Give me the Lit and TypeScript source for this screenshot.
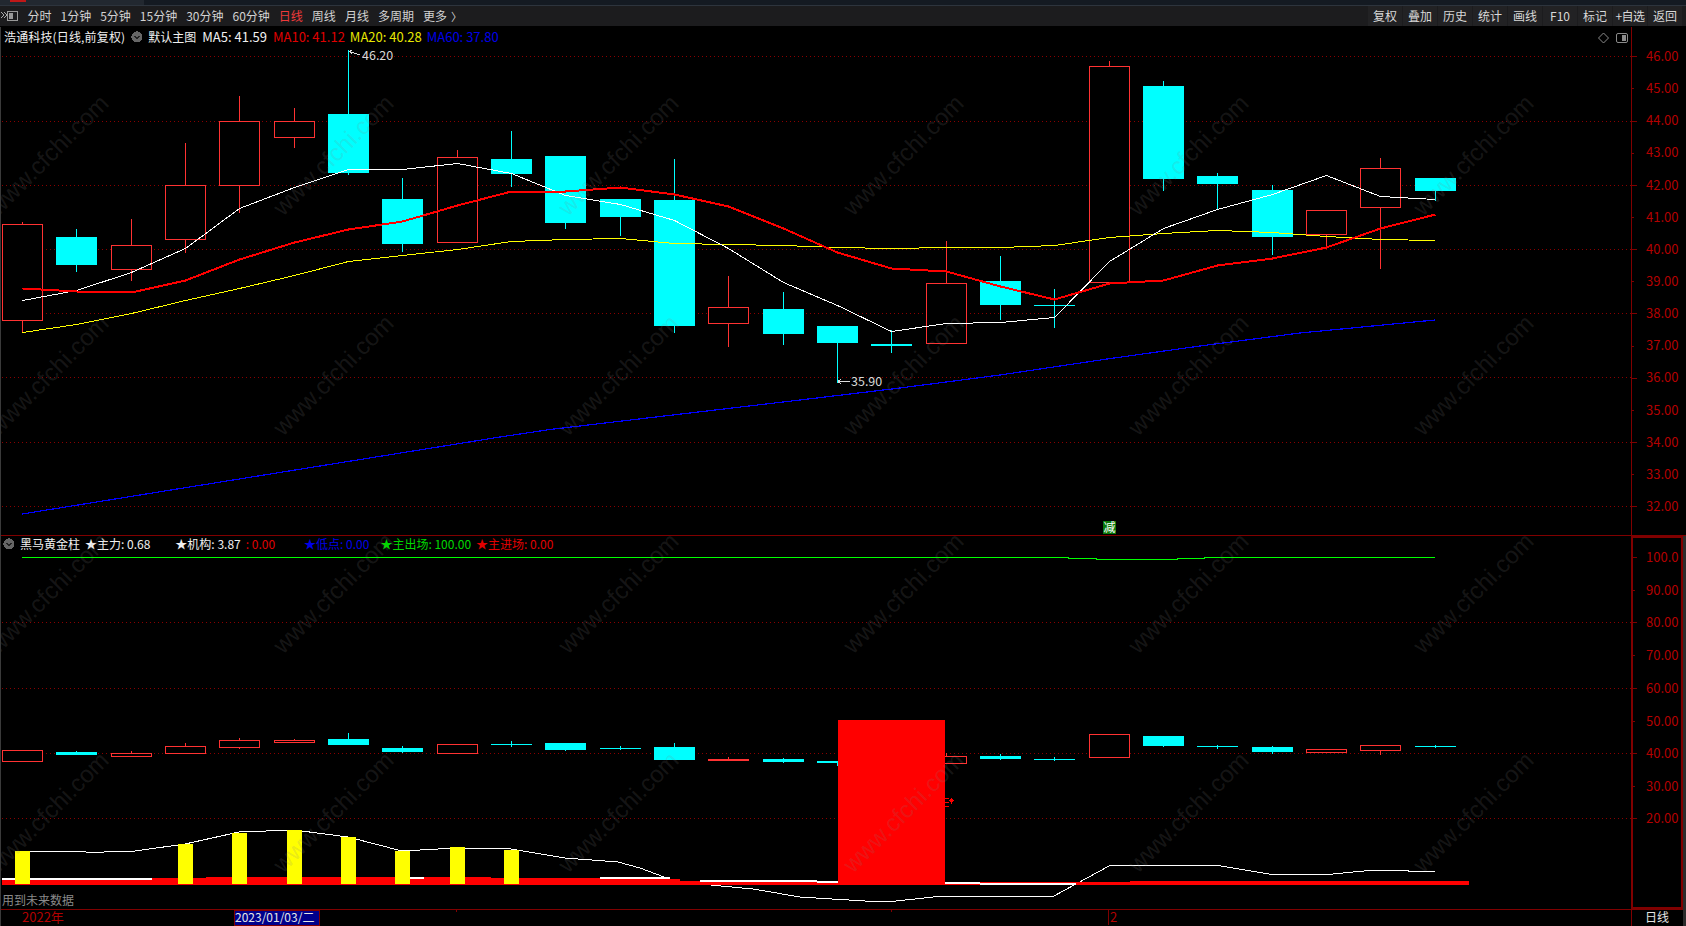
import { LitElement, html, css, svg } from "lit";
import { customElement } from "lit/decorators.js";

const CX = [22.5,76.5,131.5,185.5,239.5,294.5,348.5,402.5,457.5,511.5,565.5,620.5,674.5,728.5,783.5,837.5,891.5,946.5,1000.5,1054.5,1109.5,1163.5,1217.5,1272.5,1326.5,1380.5,1435.5];

// [up?, bodyTop, bodyBottom, wickTop, wickBottom]
const MAIN: [number, number, number, number, number][] = [
  [1,224,320,222,332],[0,237,265,229,272],[1,245,269,219,281],[1,185,239,143,253],[1,121,185,96,213],
  [1,121,137,108,148],[0,114,173,50,175],[0,199,244,178,252],[1,157,242,150,242],[0,159,174,131,187],
  [0,156,223,156,229],[0,199,217,199,236],[0,200,326,159,333],[1,307,323,276,347],[0,309,334,292,345],
  [0,326,343,326,383],[0,344,346,330,353],[1,283,343,241,343],[0,281,305,256,320],[0,305,306,289,328],
  [1,66,282,61,285],[0,86,179,81,191],[0,176,184,173,209],[0,190,237,185,255],[1,210,234,210,246],
  [1,168,207,158,269],[0,178,191,178,201],
];
const SUB: [number, number, number, number, number][] = [
  [1,750,761,750,761],[0,752,755,751,755],[1,753,756,751,756],[1,746,753,743,753],[1,740,747,738,749],
  [1,740,742,739,743],[0,739,745,733,745],[0,748,752,746,753],[1,744,753,744,753],[0,744,745,741,747],
  [0,743,750,743,751],[0,748,749,746,750],[0,747,760,743,760],[1,759,760,757,761],[0,759,762,758,763],
  [0,761,763,761,766],[0,760,761,760,761],[1,756,763,753,763],[0,756,759,754,760],[0,759,760,757,761],
  [1,734,757,734,757],[0,736,746,736,747],[0,746,747,745,749],[0,747,752,746,754],[1,749,752,749,753],
  [1,745,750,745,755],[0,746,747,745,748],
];
const MA5 = [300,290,272,248,208,187,169,169,163,173,195,204,220,248,282,305,331,323,322,317,261,228,209,194,175,196,199];
const MA10 = [288,291,292,280,259,242,229,221,205,191,191,187,194,206,228,252,268,271,286,299,283,280,265,258,247,228,214];
const MA20 = [332,324,313,300,288,275,261,255,249,241,239,238,243,244,245,247,248,247,247,245,237,233,230,232,236,239,240];
const MA60: [number, number][] = [[22,514],[500,437],[550,429.5],[800,400],[900,388],[1000,375],[1107,359],[1200,346],[1300,333],[1435,320]];
const WHITE_UP: [number, number][] = [[22,851],[76,851],[86,852],[104,852],[135,851],[185,844],[239,832],[294,830],[348,837],[402,851],[457,848],[511,849],[565,858],[618,862],[640,868],[672,880],[700,884],[753,889],[800,897],[832,899],[865,901],[883,902],[896,901],[915,899],[942,896],[1054,896],[1109,866],[1137,865],[1190,865],[1221,866],[1269,874],[1333,874],[1374,870],[1408,870],[1408,871],[1435,871]];
const WHITE_LOW: [number, number, number][] = [[2,152,878],[398,424,877],[600,670,877],[700,800,880],[800,817,880],[817,838,881],[945,980,882],[980,1034,883],[1034,1076,883]];
const BAND: [number, number, number][] = [[2,206,878],[206,491,877],[491,600,878],[600,680,879],[680,800,881],[800,1076,882],[1076,1130,882],[1130,1469,881]];
const YELLOW: [number, number][] = [[22.5,851],[185.5,844],[239.5,833],[294.5,830],[348.5,837],[402.5,851],[457.5,847],[511.5,850]];

const GRID_MAIN = [56,121,185,249,313,377,442,506];
const GRID_SUB = [622,688,753,818];
const AXIS_MAIN = Array.from({ length: 15 }, (_, i) => ({ v: (46 - i).toFixed(2), y: 56.3 + i * 32.14, major: i % 2 === 0 }));
const AXIS_SUB = [["100.0",557,1],["90.00",590,0],["80.00",622,1],["70.00",655,0],["60.00",688,1],["50.00",721,0],["40.00",753,1],["30.00",786,0],["20.00",818,1]] as [string, number, number][];

const LEFT_TOOLS = ["分时","1分钟","5分钟","15分钟","30分钟","60分钟","日线","周线","月线","多周期","更多"];
const RIGHT_TOOLS = ["复权","叠加","历史","统计","画线","F10","标记","+自选","返回"];
const WM_X = [-2,283,568,853,1138,1423];
const WM_Y = [217,437,655,874];

const pts = (a: [number, number][]) => a.map((p) => p.join(",")).join(" ");
const maPts = (a: number[]) => a.map((y, i) => `${CX[i]},${y + 0.5}`).join(" ");

function candles(data: typeof MAIN) {
  return data.map(([up, t, b, wt, wb], i) => {
    const x = CX[i];
    if (up) {
      return svg`<g class="up">
        ${wt < t ? svg`<line x1=${x} x2=${x} y1=${wt} y2=${t}></line>` : ""}
        ${wb > b ? svg`<line x1=${x} x2=${x} y1=${b} y2=${wb}></line>` : ""}
        <rect x=${x - 20} y=${t + 0.5} width="40" height=${b - t}></rect></g>`;
    }
    return svg`<g class="down">
      <line x1=${x} x2=${x} y1=${wt} y2=${wb}></line>
      <rect x=${x - 20.5} y=${t} width="41" height=${b - t}></rect></g>`;
  });
}

const expander = (cx: number, cy: number) => svg`
  <circle cx=${cx} cy=${cy} r="5.6" fill="#666"></circle>
  <path d="M${cx - 2.6} ${cy - 1.2}L${cx} ${cy + 1.4}L${cx + 2.6} ${cy - 1.2}" fill="none" stroke="#222" stroke-width="1.3"></path>`;

@customElement("app-root")
export class AppRoot extends LitElement {
  static styles = css`
    :host { display: block; position: relative; width: 1686px; height: 926px; background: #000; overflow: hidden;
      font-family: "Noto Sans CJK SC", "Noto Sans", sans-serif; font-size: 12px; color: #ddd; }
    .titlebar { height: 5px; background: #141a22; display: flex; }
    .tb-left { width: 144px; background: #222830; padding-left: 10px; box-sizing: border-box; }
    .tb-red { width: 16px; height: 2px; background: #c01818; }
    .toolbar { height: 20px; background: #1c1c1e; border-top: 1px solid #2d343d; border-bottom: 1px solid #000;
      display: flex; justify-content: space-between; align-items: stretch; padding-left: 1px; }
    .tools { display: flex; align-items: center; }
    .tools svg { width: 17px; height: 12px; margin-right: 9.5px; }
    .tool { margin-right: 9px; color: #d2d2d2; line-height: 20px; white-space: nowrap; }
    .tool.active { color: #f03a3a; }
    .chev { font-size: 11px; margin-left: -5px; color: #d2d2d2; }
    .btns { display: flex; margin-right: 4px; }
    .btn { width: 34px; margin-left: 1px; background: #222224; color: #d8d8d8; line-height: 20px; text-align: center; white-space: nowrap; }
    .btn.tight { letter-spacing: -0.5px; }
    .panel { display: flex; position: relative; }
    .panel.main { height: 509px; }
    .panel.sub { height: 373px; }
    .panel.time { height: 17px; }
    .plot { width: 1631px; flex: none; display: block; }
    .axis { width: 55px; flex: none; display: block; }
    .up line { stroke: #ff3232; }
    .up rect { fill: #000; stroke: #ff3232; }
    .down line { stroke: #0ff; }
    .down rect { fill: #0ff; }
    svg { shape-rendering: crispEdges; }
    .grid { stroke: #8a0000; stroke-dasharray: 1 3; }
    .rule { stroke: #800000; fill: none; }
    .rule2 { stroke: #800000; stroke-width: 2; fill: none; }
    .ma { fill: none; }
    .ax { fill: #b30000; font-size: 13px; shape-rendering: auto; }
    .mark { fill: #d8d8d8; font-size: 12.5px; }
    .arrow { stroke: #ddd; fill: none; }
    .hint { fill: #8a8a8a; font-size: 12px; }
    .ax-white { fill: #e6e6e6; font-size: 12px; }
    .badge { fill: #fff; font-size: 12px; }
    .legend { position: absolute; left: 0; top: 0; height: 20px; display: flex; align-items: center; white-space: nowrap; line-height: 20px; }
    .legend.m { left: 4px; }
    .legend.s { left: 3px; top: -2px; }
    .legend svg { width: 12px; height: 12px; flex: none; }
    .name { letter-spacing: 0.15px; }
    .gap-l { margin-left: 6px; }
    .num { font-size: 13px; }
    .w { color: #f0f0f0; }
    .r { color: #e00000; }
    .y { color: #e8e800; }
    .b { color: #0000e8; }
    .g { color: #00d800; }
    .ml6 { margin-left: 6px; }
    .ml5 { margin-left: 5px; }
    .ml11 { margin-left: 11px; }
    .star-w { margin-left: 5px; }
    .star-2 { margin-left: 25px; }
    .star-3 { margin-left: 29px; }
    .watermark { position: absolute; left: 0; top: 0; width: 1686px; height: 926px; pointer-events: none; shape-rendering: auto; }
    .watermark text { fill: rgba(128, 128, 128, .18); font-family: "Liberation Sans", sans-serif; font-size: 24px; }
    .edge-l { position: absolute; left: 0; top: 27px; bottom: 0; width: 1px; background: #3a3a3a; }
    .edge-r { position: absolute; right: 0; top: 536px; bottom: 0; width: 3px; background: #2c2c2c; }
  `;

  render() {
    return html`
      <div class="titlebar"><div class="tb-left"><div class="tb-red"></div></div></div>
      <div class="toolbar">
        <div class="tools">
          <svg viewBox="0 0 17 12">
            <path d="M0 2l3 3-3 3M3 2l3 3-3 3" fill="none" stroke="#aaa" stroke-width="1"></path>
            <rect x="6.5" y="1.5" width="10" height="9" rx="1" fill="none" stroke="#999"></rect>
            <rect x="8" y="3" width="4" height="6" fill="#999"></rect>
          </svg>
          ${LEFT_TOOLS.map((t) => html`<span class="tool ${t === "日线" ? "active" : ""}">${t}</span>`)}
          <span class="chev">〉</span>
        </div>
        <div class="btns">
          ${RIGHT_TOOLS.map((t) => html`<span class="btn ${t === "+自选" ? "tight" : ""}">${t}</span>`)}
        </div>
      </div>

      <div class="panel main">
        <svg class="plot" viewBox="0 27 1631 509" width="1631" height="509">
          ${GRID_MAIN.map((y) => svg`<line class="grid" x1="2" x2="1631" y1=${y + 0.5} y2=${y + 0.5}></line>`)}
          ${candles(MAIN)}
          <polyline class="ma" stroke="#0000ff" stroke-width="1.2" points=${pts(MA60)}></polyline>
          <polyline class="ma" stroke="#ffff00" points=${maPts(MA20)}></polyline>
          <polyline class="ma" stroke="#ffffff" points=${maPts(MA5)}></polyline>
          <polyline class="ma" stroke="#ff0000" stroke-width="2" points=${maPts(MA10)}></polyline>
          <path class="arrow" d="M349 51.5L360 55M349 51.5l3-1.5M349 51.5l3 2"></path>
          <text class="mark" x="362" y="60">46.20</text>
          <path class="arrow" d="M838 381.5H850M838 381.5l3-2.5M838 381.5l3 2.5"></path>
          <text class="mark" x="851" y="386">35.90</text>
          <rect x="1103" y="521" width="13" height="13" fill="#0a780a"></rect>
          <text class="badge" x="1103.5" y="532">减</text>
          <line class="rule" x1="0" x2="1631" y1="535.5" y2="535.5"></line>
          <path d="M1603.5 33l5 5-5 5-5-5z" fill="none" stroke="#8a8a8a" shape-rendering="auto"></path>
          <rect x="1616.5" y="33.5" width="11" height="9" rx="1.5" fill="none" stroke="#8a8a8a" shape-rendering="auto"></rect>
          <rect x="1622" y="35" width="4" height="6" fill="#8a8a8a"></rect>
        </svg>
        <svg class="axis" viewBox="1631 27 55 509" width="55" height="509">
          <line class="rule" x1="1631.5" x2="1631.5" y1="27" y2="536"></line>
          <line class="rule" x1="1631" x2="1686" y1="535.5" y2="535.5"></line>
          ${AXIS_MAIN.map((a) => svg`
            <line class="rule" x1="1631" x2=${a.major ? 1637 : 1634} y1=${Math.round(a.y) + 0.5} y2=${Math.round(a.y) + 0.5}></line>
            <text class="ax" x="1646" y=${a.y + 4.7}>${a.v}</text>`)}
        </svg>
        <div class="legend m">
          <span class="w name">浩通科技(日线,前复权)</span>
          <svg class="gap-l" viewBox="131 31 12 12">${expander(137, 37)}</svg>
          <span class="w ml5">默认主图</span>
          <span class="w ml6 num">MA5: 41.59</span>
          <span class="r ml6 num">MA10: 41.12</span>
          <span class="y ml5 num">MA20: 40.28</span>
          <span class="b ml5 num">MA60: 37.80</span>
        </div>
      </div>

      <div class="panel sub">
        <svg class="plot" viewBox="0 536 1631 373" width="1631" height="373">
          ${GRID_SUB.map((y) => svg`<line class="grid" x1="2" x2="1631" y1=${y + 0.5} y2=${y + 0.5}></line>`)}
          ${candles(SUB)}
          <path d="M22 557.5H1068V558.5H1096V559.5H1177V558.5H1204V557.5H1435" fill="none" stroke="#00ff00"></path>
          <polyline class="ma" stroke="#ffffff" points=${pts(WHITE_UP)}></polyline>
          ${BAND.map(([a, b, t]) => svg`<rect x=${a} y=${t} width=${b - a} height=${885 - t} fill="#ff0000"></rect>`)}
          ${WHITE_LOW.map(([a, b, y]) => svg`<rect x=${a} y=${y} width=${b - a} height="2" fill="#fff"></rect>`)}
          ${YELLOW.map(([x, t]) => svg`<rect x=${x - 7.5} y=${t} width="15" height=${884 - t} fill="#ffff00"></rect>`)}
          <rect x="838" y="720" width="107" height="165" fill="#ff0000"></rect>
          <path d="M945 798.5h3.5M945 802.5h3.5M945 806.5h3.5" stroke="#ff0000" fill="none"></path>
          <path d="M951.5 798l2.5 2.8-2.5 2.8-2.5-2.8z" fill="#ff0000"></path>
          <text class="hint" x="2" y="905">用到未来数据</text>
        </svg>
        <svg class="axis" viewBox="1631 536 55 373" width="55" height="373">
          <rect class="rule2" x="1632" y="537" width="50" height="371"></rect>
          ${AXIS_SUB.map(([v, y, major]) => svg`
            <line class="rule" x1="1632" x2=${major ? 1637 : 1635} y1=${y + 0.5} y2=${y + 0.5}></line>
            <text class="ax" x="1646" y=${y + 4.7}>${v}</text>`)}
        </svg>
        <div class="legend s">
          <svg viewBox="3 537 12 12">${expander(9, 543)}</svg>
          <span class="w ml5">黑马黄金柱</span>
          <span class="w star-w">★主力: 0.68</span>
          <span class="w star-2">★机构: 3.87</span>
          <span class="r ml5">: 0.00</span>
          <span class="b star-3">★低点: 0.00</span>
          <span class="g ml11">★主出场: 100.00</span>
          <span class="r ml5">★主进场: 0.00</span>
        </div>
      </div>

      <div class="panel time">
        <svg class="plot" viewBox="0 909 1631 17" width="1631" height="17">
          <line class="rule" x1="0" x2="1631" y1="909.5" y2="909.5"></line>
          <text class="ax" x="22" y="922">2022年</text>
          <rect x="234" y="910.5" width="85" height="15" fill="#00008c" stroke="#800000"></rect>
          <text class="ax-white" x="235" y="922">2023/01/03/二</text>
          <line class="rule" x1="456.5" x2="456.5" y1="909" y2="912"></line>
          <line class="rule" x1="891.5" x2="891.5" y1="909" y2="912"></line>
          <line class="rule" x1="1108.5" x2="1108.5" y1="909" y2="925"></line>
          <text class="ax" x="1110" y="922">2</text>
        </svg>
        <svg class="axis" viewBox="1631 909 55 17" width="55" height="17">
          <line class="rule" x1="1631" x2="1686" y1="909.5" y2="909.5"></line>
          <line class="rule" x1="1631.5" x2="1631.5" y1="909" y2="926"></line>
          <text class="ax-white" x="1645" y="922">日线</text>
        </svg>
      </div>

      <svg class="watermark" viewBox="0 0 1686 926">
        ${WM_Y.flatMap((y) => WM_X.map((x) => svg`<text x=${x} y=${y} transform="rotate(-45 ${x} ${y})">www.cfchi.com</text>`))}
      </svg>
      <div class="edge-l"></div>
      <div class="edge-r"></div>
    `;
  }
}
